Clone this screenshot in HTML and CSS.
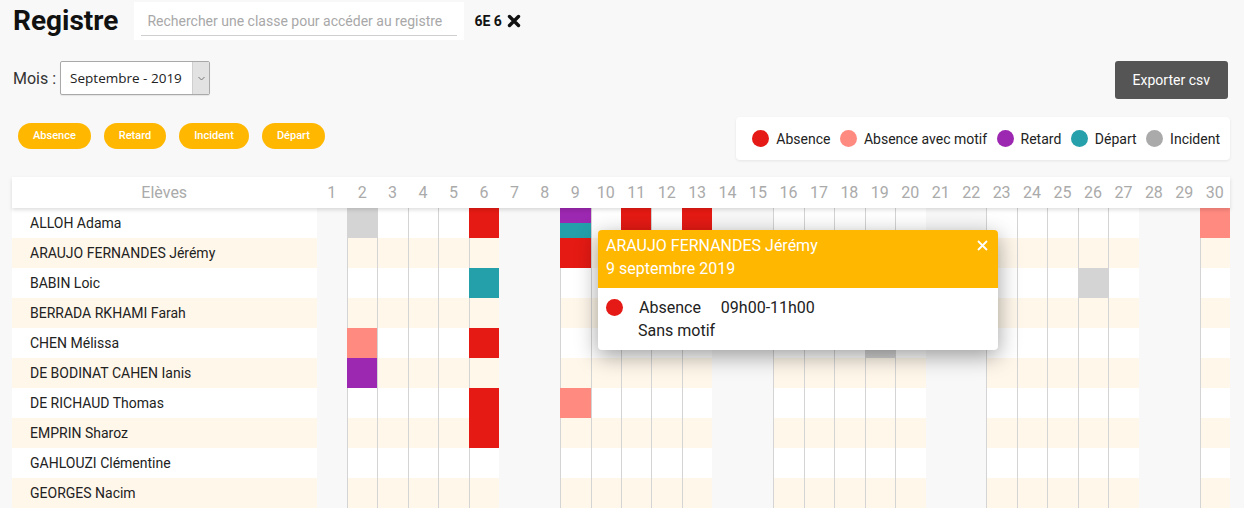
FILE: index.html
```html
<!DOCTYPE html>
<html lang="fr">
<head>
<meta charset="utf-8">
<title>Registre</title>
<link rel="stylesheet" href="styles.css">
</head>
<body>
<div class="page">
  <div class="topbar">
    <h1 class="title">Registre</h1>
    <div class="search"><div class="search-input">Rechercher une classe pour accéder au registre</div></div>
    <div class="classe">6E 6
      <svg class="x-icon" width="14" height="14" viewBox="0 0 14 14"><path d="M2.5 2.5 L11.5 11.5 M11.5 2.5 L2.5 11.5" stroke="#111" stroke-width="3.4" stroke-linecap="round"/></svg>
    </div>
  </div>

  <div class="month-row">
    <div class="mois">
      <span class="mois-label">Mois :</span>
      <div class="select">
        <span class="select-text">Septembre - 2019</span>
        <span class="select-arrow"><svg width="7" height="5" viewBox="0 0 7 5"><path d="M0.5 1 L3.5 4 L6.5 1" fill="none" stroke="#777" stroke-width="1"/></svg></span>
      </div>
    </div>
    <div class="export">Exporter csv</div>
  </div>

  <div class="filters">
    <div class="pills">
      <span class="pill">Absence</span>
      <span class="pill">Retard</span>
      <span class="pill">Incident</span>
      <span class="pill">Départ</span>
    </div>
    <div class="legend">
      <span class="lg"><i class="dot red"></i>Absence</span>
      <span class="lg"><i class="dot salmon"></i>Absence avec motif</span>
      <span class="lg"><i class="dot purple"></i>Retard</span>
      <span class="lg"><i class="dot teal"></i>Départ</span>
      <span class="lg"><i class="dot grey"></i>Incident</span>
    </div>
  </div>

  <div class="table">
    <div class="thead">
      <span>Elèves</span><span>1</span><span>2</span><span>3</span><span>4</span><span>5</span><span>6</span><span>7</span><span>8</span><span>9</span><span>10</span><span>11</span><span>12</span><span>13</span><span>14</span><span>15</span><span>16</span><span>17</span><span>18</span><span>19</span><span>20</span><span>21</span><span>22</span><span>23</span><span>24</span><span>25</span><span>26</span><span>27</span><span>28</span><span>29</span><span>30</span>
    </div>
    <div class="tbody">
      <div class="row"><span class="name">ALLOH Adama</span><i class="w"></i><i class="g"></i><i></i><i></i><i></i><i class="r"></i><i class="w"></i><i class="w"></i><i class="pt"></i><i></i><i class="r"></i><i></i><i class="r"></i><i class="w"></i><i class="w"></i><i></i><i></i><i></i><i></i><i></i><i class="w"></i><i class="w"></i><i></i><i></i><i></i><i></i><i></i><i class="w"></i><i class="w"></i><i class="s"></i></div>
      <div class="row"><span class="name">ARAUJO FERNANDES Jérémy</span><i class="w"></i><i></i><i></i><i></i><i></i><i></i><i class="w"></i><i class="w"></i><i class="r"></i><i></i><i></i><i></i><i></i><i class="w"></i><i class="w"></i><i></i><i></i><i></i><i></i><i></i><i class="w"></i><i class="w"></i><i></i><i></i><i></i><i></i><i></i><i class="w"></i><i class="w"></i><i></i></div>
      <div class="row"><span class="name">BABIN Loic</span><i class="w"></i><i></i><i></i><i></i><i></i><i class="t"></i><i class="w"></i><i class="w"></i><i></i><i></i><i></i><i></i><i></i><i class="w"></i><i class="w"></i><i></i><i></i><i></i><i></i><i></i><i class="w"></i><i class="w"></i><i></i><i></i><i></i><i class="g"></i><i></i><i class="w"></i><i class="w"></i><i></i></div>
      <div class="row"><span class="name">BERRADA RKHAMI Farah</span><i class="w"></i><i></i><i></i><i></i><i></i><i></i><i class="w"></i><i class="w"></i><i></i><i></i><i></i><i></i><i></i><i class="w"></i><i class="w"></i><i></i><i></i><i></i><i></i><i></i><i class="w"></i><i class="w"></i><i></i><i></i><i></i><i></i><i></i><i class="w"></i><i class="w"></i><i></i></div>
      <div class="row"><span class="name">CHEN Mélissa</span><i class="w"></i><i class="s"></i><i></i><i></i><i></i><i class="r"></i><i class="w"></i><i class="w"></i><i></i><i></i><i></i><i></i><i></i><i class="w"></i><i class="w"></i><i></i><i></i><i></i><i class="g"></i><i></i><i class="w"></i><i class="w"></i><i></i><i></i><i></i><i></i><i></i><i class="w"></i><i class="w"></i><i></i></div>
      <div class="row"><span class="name">DE BODINAT CAHEN Ianis</span><i class="w"></i><i class="p"></i><i></i><i></i><i></i><i></i><i class="w"></i><i class="w"></i><i></i><i></i><i></i><i></i><i></i><i class="w"></i><i class="w"></i><i></i><i></i><i></i><i></i><i></i><i class="w"></i><i class="w"></i><i></i><i></i><i></i><i></i><i></i><i class="w"></i><i class="w"></i><i></i></div>
      <div class="row"><span class="name">DE RICHAUD Thomas</span><i class="w"></i><i></i><i></i><i></i><i></i><i class="r"></i><i class="w"></i><i class="w"></i><i class="s"></i><i></i><i></i><i></i><i></i><i class="w"></i><i class="w"></i><i></i><i></i><i></i><i></i><i></i><i class="w"></i><i class="w"></i><i></i><i></i><i></i><i></i><i></i><i class="w"></i><i class="w"></i><i></i></div>
      <div class="row"><span class="name">EMPRIN Sharoz</span><i class="w"></i><i></i><i></i><i></i><i></i><i class="r"></i><i class="w"></i><i class="w"></i><i></i><i></i><i></i><i></i><i></i><i class="w"></i><i class="w"></i><i></i><i></i><i></i><i></i><i></i><i class="w"></i><i class="w"></i><i></i><i></i><i></i><i></i><i></i><i class="w"></i><i class="w"></i><i></i></div>
      <div class="row"><span class="name">GAHLOUZI Clémentine</span><i class="w"></i><i></i><i></i><i></i><i></i><i></i><i class="w"></i><i class="w"></i><i></i><i></i><i></i><i></i><i></i><i class="w"></i><i class="w"></i><i></i><i></i><i></i><i></i><i></i><i class="w"></i><i class="w"></i><i></i><i></i><i></i><i></i><i></i><i class="w"></i><i class="w"></i><i></i></div>
      <div class="row"><span class="name">GEORGES Nacim</span><i class="w"></i><i></i><i></i><i></i><i></i><i></i><i class="w"></i><i class="w"></i><i></i><i></i><i></i><i></i><i></i><i class="w"></i><i class="w"></i><i></i><i></i><i></i><i></i><i></i><i class="w"></i><i class="w"></i><i></i><i></i><i></i><i></i><i></i><i class="w"></i><i class="w"></i><i></i></div>
    </div>

    <div class="popup">
      <div class="popup-head">
        <div>ARAUJO FERNANDES Jérémy</div>
        <div>9 septembre 2019</div>
        <svg class="close" width="11" height="11" viewBox="0 0 11 11"><path d="M1 1 L10 10 M10 1 L1 10" stroke="#fff" stroke-width="1.8"/></svg>
      </div>
      <div class="popup-body">
        <div class="ev"><i class="dot red"></i><span>Absence</span><span class="hours">09h00-11h00</span></div>
        <div class="motif">Sans motif</div>
      </div>
    </div>
  </div>
</div>
</body>
</html>
```
FILE: styles.css
```css
* { box-sizing: border-box; }

body {
  margin: 0;
  background: #f8f8f8;
  font-family: Roboto, "Liberation Sans", sans-serif;
  color: #222;
}

.page {
  padding: 0 14px 0 12px;
}

/* top bar */
.topbar {
  display: flex;
  align-items: center;
  height: 40px;
  padding-top: 2px;
}

.title {
  margin: 0 16px 0 1px;
  font-size: 28px;
  font-weight: 700;
  line-height: 38px;
  color: #111;
}

.search {
  width: 330px;
  height: 38px;
  background: #fff;
  padding: 0 7px;
  display: flex;
  align-items: center;
}

.search-input {
  width: 100%;
  margin-top: 3px;
  padding: 3px 6px 5px;
  border-bottom: 1px solid #cfcfcf;
  font-size: 14px;
  line-height: 17px;
  color: #a8a8a8;
}

.classe {
  margin-left: 10px;
  display: flex;
  align-items: center;
  font-size: 14px;
  font-weight: 700;
  color: #111;
}

.x-icon {
  margin-left: 5px;
}

/* month row */
.month-row {
  display: flex;
  justify-content: space-between;
  align-items: flex-start;
  margin-top: 21px;
}

.mois {
  display: flex;
  align-items: center;
  gap: 4px;
  margin-left: 1px;
}

.mois-label {
  font-size: 16px;
  color: #333;
}

.select {
  width: 150px;
  height: 34px;
  display: flex;
  background: #fff;
  border: 1px solid #a9a9a9;
  border-radius: 2px;
  box-shadow: 0 1px 1px rgba(0,0,0,.08);
}

.select-text {
  flex: 1;
  padding-left: 9px;
  font-family: "Open Sans", "Noto Sans", sans-serif;
  font-size: 13.5px;
  line-height: 32px;
  color: #222;
}

.select-arrow {
  width: 17px;
  background: #e2e2e2;
  border-left: 1px solid #cfcfcf;
  display: flex;
  align-items: center;
  justify-content: center;
}

.export {
  height: 38px;
  line-height: 38px;
  padding: 0 18px;
  margin-right: 2px;
  background: #555;
  color: #fff;
  font-size: 14px;
  border-radius: 3px;
}

/* filters */
.filters {
  display: flex;
  justify-content: space-between;
  align-items: flex-start;
  margin-top: 18px;
}

.pills {
  display: flex;
  gap: 13px;
  margin: 6px 0 0 6px;
}

.pill {
  height: 26px;
  line-height: 26px;
  padding: 0 15px;
  border-radius: 13px;
  background: #ffb700;
  color: #fff;
  font-size: 11px;
  font-weight: 500;
}

.legend {
  height: 43px;
  display: flex;
  align-items: center;
  gap: 9.5px;
  padding: 0 10px 0 16px;
  background: #fff;
  border-radius: 4px;
  box-shadow: 0 1px 3px rgba(0,0,0,.08);
}

.lg {
  display: flex;
  align-items: center;
  font-size: 14px;
  color: #222;
}

.dot {
  display: inline-block;
  width: 17px;
  height: 17px;
  border-radius: 50%;
  margin-right: 7px;
}

.dot.red { background: #e51a16; }
.dot.salmon { background: #ff8a80; }
.dot.purple { background: #9c27b0; }
.dot.teal { background: #26a0aa; }
.dot.grey { background: #aaaaaa; }

/* table */
.table {
  position: relative;
  margin-top: 17px;
}

.thead,
.row {
  display: grid;
  grid-template-columns: 25% repeat(30, 1fr);
}

.thead {
  position: relative;
  z-index: 1;
  height: 31px;
  align-items: center;
  background: #fff;
  box-shadow: 0 2px 4px rgba(0,0,0,.13);
  color: #aaa;
  font-size: 16px;
  text-align: center;
}

.row {
  height: 30px;
  background: #fff;
}

.row:nth-child(even) {
  background: #fff7ea;
}

.name {
  padding-left: 18px;
  font-size: 14px;
  line-height: 30px;
  color: #222;
}

.row i {
  display: block;
  border-left: 1px solid #d4d4d4;
}

.row i.w {
  border-left: 0;
  background: #f8f8f8;
}

.row i.r { background: #e51a14; border-left-color: transparent; }
.row i.s { background: #ff8a80; border-left-color: transparent; }
.row i.p { background: #9c27b0; border-left-color: transparent; }
.row i.t { background: #24a0ab; border-left-color: transparent; }
.row i.g { background: #d4d4d4; border-left-color: transparent; }
.row i.pt {
  background: linear-gradient(#9c27b0 0 50%, #24a0ab 50% 100%);
  border-left-color: transparent;
}

/* popup */
.popup {
  position: absolute;
  left: 586px;
  top: 53px;
  z-index: 2;
  width: 400px;
  background: #fff;
  border-radius: 4px;
  overflow: hidden;
  box-shadow: 0 6px 22px rgba(0,0,0,.38);
}

.popup-head {
  position: relative;
  padding: 4px 8px 8px;
  background: #ffb700;
  color: #fff;
  font-size: 16px;
  line-height: 23px;
}

.close {
  position: absolute;
  right: 10px;
  top: 10px;
}

.popup-body {
  padding: 8px 8px 8px;
  font-size: 16px;
  line-height: 23px;
  color: #222;
}

.ev {
  display: flex;
  align-items: center;
}

.ev .dot {
  margin-right: 16px;
}

.hours {
  margin-left: 20px;
}

.motif {
  padding-left: 32px;
}
```
